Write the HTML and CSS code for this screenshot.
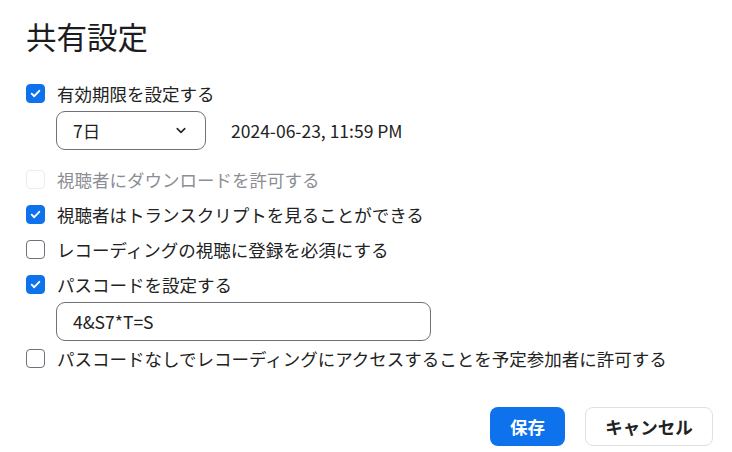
FILE: index.html
```html
<!DOCTYPE html>
<html lang="ja">
<head>
<meta charset="utf-8">
<link rel="stylesheet" href="styles.css">
</head>
<body>
<div class="dialog">
  <h1 class="title">共有設定</h1>
  <div class="options">
    <label class="row">
      <span class="cb checked"><svg viewBox="0 0 20 20"><path d="M5.5 10.2l3 3 6-6.4" /></svg></span>
      <span class="text">有効期限を設定する</span>
    </label>
    <div class="sub">
      <div class="select"><span>7日</span><svg class="chev" viewBox="0 0 12 8"><path d="M1.5 1.8l4.5 4.4 4.5-4.4" /></svg></div>
      <span class="date">2024-06-23, 11:59 PM</span>
    </div>
    <label class="row gap-top disabled">
      <span class="cb"></span>
      <span class="text">視聴者にダウンロードを許可する</span>
    </label>
    <label class="row">
      <span class="cb checked"><svg viewBox="0 0 20 20"><path d="M5.5 10.2l3 3 6-6.4" /></svg></span>
      <span class="text">視聴者はトランスクリプトを見ることができる</span>
    </label>
    <label class="row">
      <span class="cb"></span>
      <span class="text">レコーディングの視聴に登録を必須にする</span>
    </label>
    <label class="row">
      <span class="cb checked"><svg viewBox="0 0 20 20"><path d="M5.5 10.2l3 3 6-6.4" /></svg></span>
      <span class="text">パスコードを設定する</span>
    </label>
    <div class="sub">
      <div class="input">4&amp;S7*T=S</div>
    </div>
    <label class="row">
      <span class="cb"></span>
      <span class="text">パスコードなしでレコーディングにアクセスすることを予定参加者に許可する</span>
    </label>
  </div>
  <div class="actions">
    <button class="btn primary">保存</button>
    <button class="btn secondary">キャンセル</button>
  </div>
</div>
</body>
</html>
```

FILE: styles.css
```css
* { box-sizing: border-box; }
html, body { margin: 0; padding: 0; background: #fff; }
body {
  font-family: "Noto Sans CJK JP", "Noto Sans", sans-serif;
  color: #222;
  width: 732px;
  height: 452px;
  overflow: hidden;
}
.dialog {
  padding: 18px 19px 0 26px;
}
.title {
  margin: 0;
  font-size: 30.5px;
  font-weight: 400;
  line-height: 36px;
  height: 36px;
  color: #1d1d1f;
}
.options {
  margin-top: 22px;
  display: flex;
  flex-direction: column;
}
.row {
  display: flex;
  align-items: center;
  height: 35px;
  font-size: 17.5px;
  line-height: 24px;
}
.row.gap-top { margin-top: 12px; }
.cb {
  width: 19px;
  height: 19px;
  border: 1.5px solid #6e7179;
  border-radius: 4px;
  flex: none;
  display: flex;
  align-items: center;
  justify-content: center;
  background: #fff;
}
.cb.checked {
  background: #0e72ed;
  border-color: #0e72ed;
}
.cb svg { width: 19px; height: 19px; }
.cb svg path {
  fill: none;
  stroke: #fff;
  stroke-width: 2.2;
  stroke-linecap: round;
  stroke-linejoin: round;
}
.text { margin-left: 12px; white-space: nowrap; }
.disabled .cb { border-color: #ececee; }
.disabled .text { color: #8b8e94; }
.sub {
  display: flex;
  align-items: center;
  padding-left: 30px;
}
.select {
  width: 150px;
  height: 39px;
  border: 1px solid #6e7179;
  border-radius: 9px;
  display: flex;
  align-items: center;
  justify-content: space-between;
  padding: 0 19px 0 16px;
  font-size: 17.5px;
}
.chev { width: 10px; height: 7px; }
.chev path { fill: none; stroke: #222; stroke-width: 1.9; stroke-linecap: round; stroke-linejoin: round; }
.date { margin-left: 25px; font-size: 17.5px; }
.input {
  width: 375px;
  height: 39px;
  border: 1px solid #6e7179;
  border-radius: 9px;
  display: flex;
  align-items: center;
  padding-left: 16px;
  font-size: 17.5px;
}
.actions {
  margin-top: 31px;
  display: flex;
  justify-content: flex-end;
  gap: 20px;
}
.btn {
  height: 39px;
  border-radius: 8px;
  font-family: "Noto Sans CJK JP", "Noto Sans", sans-serif;
  font-size: 17.5px;
  font-weight: 700;
  padding: 0;
}
.primary {
  width: 75px;
  background: #0e72ed;
  color: #fff;
  border: none;
}
.secondary {
  width: 128px;
  background: #fff;
  color: #222;
  border: 1px solid #dfe0e3;
}
```
